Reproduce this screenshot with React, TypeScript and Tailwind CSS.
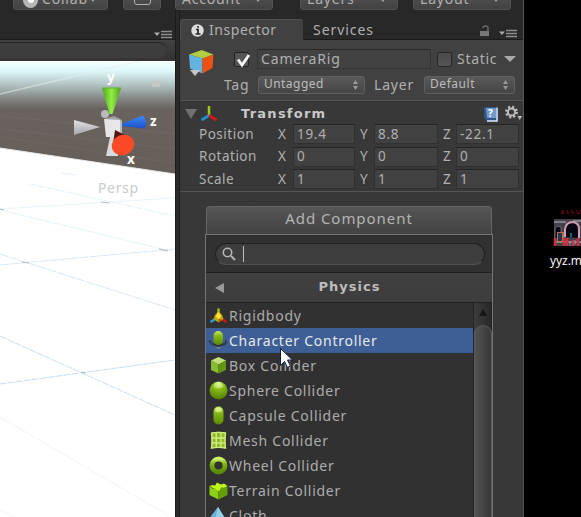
import React from 'react';

const menuItems = [
  ['Rigidbody', 'rigid'],
  ['Character Controller', 'character'],
  ['Box Collider', 'box'],
  ['Sphere Collider', 'sphere'],
  ['Capsule Collider', 'capsule'],
  ['Mesh Collider', 'mesh'],
  ['Wheel Collider', 'wheel'],
  ['Terrain Collider', 'terrain'],
  ['Cloth', 'cloth'],
];

const vectors = [
  ['Position', '19.4', '8.8', '-22.1'],
  ['Rotation', '0', '0', '0'],
  ['Scale', '1', '1', '1'],
];

function Defs() {
  return (
    <svg className="absolute h-0 w-0">
      <defs>
        <radialGradient id="green" cx=".5" cy=".12" r=".9">
          <stop offset="0" stopColor="#e4ff9a" />
          <stop offset=".3" stopColor="#8fc31a" />
          <stop offset="1" stopColor="#4f7d00" />
        </radialGradient>
        <linearGradient id="greenV" x1="0" y1="0" x2="0" y2="1">
          <stop offset="0" stopColor="#c9ec62" />
          <stop offset=".35" stopColor="#86b818" />
          <stop offset="1" stopColor="#588900" />
        </linearGradient>
        <linearGradient id="cone" x1="0" y1="0" x2="1" y2="0">
          <stop offset="0" stopColor="#4fa51b" />
          <stop offset=".5" stopColor="#92ee45" />
          <stop offset="1" stopColor="#4c9c1c" />
        </linearGradient>
        <linearGradient id="grey" x1="0" y1="0" x2="0" y2="1">
          <stop offset="0" stopColor="#e2e2e5" />
          <stop offset="1" stopColor="#a5a5aa" />
        </linearGradient>
        <linearGradient id="blue" x1="0" y1="0" x2="0" y2="1">
          <stop offset="0" stopColor="#3f8cff" />
          <stop offset="1" stopColor="#1850c4" />
        </linearGradient>
      </defs>
    </svg>
  );
}

function ItemIcon({ kind }: { kind: string }) {
  return (
    <svg className="h-5 w-5 shrink-0" viewBox="0 0 20 20">
      {kind === 'rigid' && (
        <>
          <path d="M10.500 2.500v7" stroke="#a0cc12" strokeWidth="2.4" />
          <path d="M9 12 2.500 16" stroke="#2c9ddd" strokeWidth="2.6" />
          <path d="m12 12 6.500 4" stroke="#d01616" strokeWidth="2.6" />
          <path d="m10.500 5 3.500 4 1.500 4-5 3.500-5-3.500 1.500-4z" fill="#c9a400" />
          <path d="m10.500 6 3 4-3 3.500-3-3.500z" fill="#f7e236" />
          <path d="M10.500 13v3.500l4.500-3z" fill="#8f7200" />
        </>
      )}
      {kind === 'character' && (
        <>
          <path d="m.500 10 2.500-1v2.500l2.500 1h9l2.500-1V9l2.500 1-2 4-3.500 1h-1l-2.500 4-2.500-4h-1L3.500 14z" fill="#303b46" />
          <path d="m7.500 16 3 2.500 3-2.500z" fill="#71808a" />
          <rect x="5.500" y="0" width="9.500" height="14" rx="4.700" fill="url(#greenV)" />
        </>
      )}
      {kind === 'box' && (
        <>
          <path d="m10.500 1 7.500 3.500-7.500 4L3 4.500z" fill="#bfe176" />
          <path d="m3 4.500 7.500 4v9L3 14z" fill="#88bd33" />
          <path d="m18 4.500-7.500 4v9L18 14z" fill="#5f9612" />
        </>
      )}
      {kind === 'sphere' && (
        <>
          <circle cx="10.500" cy="9.500" r="9" fill="url(#green)" />
          <ellipse cx="10.500" cy="4.500" rx="5" ry="3" fill="#e4fca8" opacity=".45" />
        </>
      )}
      {kind === 'capsule' && (
        <>
          <rect x="5.500" y=".5" width="10" height="18" rx="5" fill="url(#greenV)" />
          <ellipse cx="10.500" cy="4" rx="3.200" ry="2.300" fill="#e8ffa9" opacity=".65" />
        </>
      )}
      {kind === 'mesh' && (
        <>
          <path d="M3 1.500q7.500-1.500 15 0-1 8 0 16-7.500-1.500-15 0 1-8 0-16" fill="#8dba2b" />
          <path d="M3.500 2q7-1.300 14 0-1 7.500 0 15-7-1.300-14 0 1-7.500 0-15M8.300 2v15M13 2v15M4 7h13M4 12h13" fill="none" stroke="#d0eb7e" strokeWidth="1.400" />
        </>
      )}
      {kind === 'wheel' && (
        <>
          <circle cx="10.500" cy="9.500" r="6.500" fill="none" stroke="url(#greenV)" strokeWidth="4.800" />
          <path d="M6 3.500q4.500-2 9 0" stroke="#d8f87e" fill="none" opacity=".7" />
        </>
      )}
      {kind === 'terrain' && (
        <>
          <path d="m1.500 5 3-1 2.500.500 2-3 4 2 3-1 3.500 2.500-9 5.500z" fill="#bdf51d" />
          <path d="M1.500 5 5 8l2-1 3.500 4v7.500l-9-4.500z" fill="#8ed114" />
          <path d="m19.500 5-3.500 2-2.500-1-3 5v7.500l9-4.500z" fill="#659e06" />
        </>
      )}
      {kind === 'cloth' && (
        <>
          <path d="M10 1 3 10l-1 7 8 3 8-6z" fill="#69b2d6" />
          <path d="m10 1-2 9 3 9 7-5z" fill="#94cee8" />
        </>
      )}
    </svg>
  );
}

function MenuIcon() {
  return (
    <svg className="h-[9px] w-[18px]" viewBox="0 0 18 9">
      <path d="M0 2.500h6l-3 3.500z" fill="#aaa" />
      <path d="M7 1.500h11M7 4.500h11M7 7.500h11" stroke="#8c8c8c" strokeWidth="1.500" />
    </svg>
  );
}

function ToolbarButton({ className, text }: { className: string; text: string }) {
  return (
    <div className={'flex h-5 shrink-0 items-center rounded-[3px] border border-[#525252] bg-linear-to-b from-[#555] to-[#424242] px-1.5 ' + className}>
      {text === 'Collab' && (
        <span className="mr-1 ml-[3px] grid h-[15px] w-[15px] shrink-0 place-items-center rounded-full bg-[#b5b5b5]">
          <i className="h-1.5 w-1.5 rounded-full bg-white" />
        </span>
      )}
      <span className="relative -top-px">{text}</span>
      <svg className="mr-1 ml-auto h-2 w-2" viewBox="0 0 8 8"><path d="M1 2h6L4 6z" fill="#a5a5a5" /></svg>
    </div>
  );
}

function Toolbar() {
  return (
    <div className="h-2.5 shrink-0 overflow-hidden bg-[#282828]">
      <div className="-mt-2.5 flex pl-[13px] text-[14px] tracking-[.8px] text-[#b0b0b0]">
        <ToolbarButton className="w-[95px]" text="Collab" />
        <div className="ml-[15px] flex h-5 w-[38px] justify-center rounded-[3px] border border-[#525252] bg-linear-to-b from-[#555] to-[#424242]">
          <div className="mt-1.5 h-2 w-[17px] rounded-[3px] border-[1.500px] border-[#b0b0b0]" />
        </div>
        <ToolbarButton className="ml-3.5 w-[98px]" text="Account" />
        <ToolbarButton className="ml-[27px] w-[98px]" text="Layers" />
        <ToolbarButton className="ml-[15px] w-[98px]" text="Layout" />
      </div>
    </div>
  );
}

function SceneView() {
  return (
    <section className="flex w-[175px] shrink-0 flex-col">
      <div className="flex h-[30px] items-end justify-end border-b border-[#1d1d1d] pr-[3px]">
        <MenuIcon />
      </div>
      <div className="h-[21px] bg-linear-to-b from-[#414141] to-[#333] pt-0.5">
        <div className="h-4 w-[167px] rounded-r-full border-t border-[#252525] bg-[#3d3d3d]" />
      </div>
      <svg className="h-[456px] w-[175px]" viewBox="0 61 175 456">
        <defs>
          <linearGradient id="sky" x1="0" y1="0" x2="0" y2="1">
            <stop offset="0" stopColor="#f4ffff" />
            <stop offset=".08" stopColor="#def8f9" />
            <stop offset=".2" stopColor="#b3c4c5" />
            <stop offset=".33" stopColor="#828583" />
            <stop offset=".42" stopColor="#69625e" />
            <stop offset="1" stopColor="#665e59" />
          </linearGradient>
        </defs>
        <path fill="#fff" d="M0 61h175v456H0z" />
        <path fill="url(#sky)" d="M0 62h175v112L0 148z" />
        <path d="M0 94 139 61" stroke="#e6eeee" strokeWidth="1.300" opacity=".55" />
        <path d="m0 116 175 18M0 129l175 20M0 137l175 26" stroke="#827b75" opacity=".25" />
        <path d="m0 148 175 26" stroke="#e7e7e7" />
        <path d="m30 184 145 32M0 209l175-11M0 210l175 42" stroke="#e5f4fa" fill="none" strokeDasharray="8 1" />
        <path d="m0 265 175-16M0 254l175 56" stroke="#d9e8f3" fill="none" strokeDasharray="9 1" />
        <path d="m0 336 175 79M0 384l175-24" stroke="#cadeec" fill="none" strokeDasharray="7 1" />
        <path d="m0 417 171 100M0 510l14 7" stroke="#f1f3f5" fill="none" />
        <path d="m0 209 4 1m97-8 8 1M22 262l7 1m130-14 9 2m-87 121 5 1" stroke="#aebabf" />
        <path d="m62 173 14 2" stroke="#e0f3fa" />
        <path d="M152 81h8v6h-8z" fill="#c6c6c5" />
        <path d="M153 81v-3q3-3 6 0" stroke="#bbbfc0" fill="none" opacity=".15" />
        <circle cx="105" cy="114" r="4" fill="#bababd" />
        <path d="M102 88h19l-8.500 26h-3z" fill="url(#cone)" />
        <path d="M102 88h19" stroke="#61b22d" />
        <path d="m74 120 26 7-26 8z" fill="url(#grey)" />
        <path d="m121 124 22-8.500q5 6 2 13l-24-2.500z" fill="url(#blue)" />
        <path d="m104 119 10-3 8 4-3 4-13-1z" fill="#a1a2a6" />
        <path d="m104 119 16 1v17h-14z" fill="#e6e6e9" />
        <path d="m120 120 2 1v14l-2 2z" fill="#b9bbc0" />
        <path d="M110 137 106 156h12v-19z" fill="#dadade" />
        <path d="m115 130 10 5-12 9z" fill="#571611" />
        <ellipse cx="123" cy="145" rx="11.500" ry="10" fill="#fa4a27" transform="rotate(-20 123 145)" />
        <g fontFamily="Noto Sans, sans-serif" fontSize="13.500" fontWeight="700" fill="#fff">
          <text x="107" y="82">y</text>
          <text x="150" y="126">z</text>
          <text x="127" y="164">x</text>
        </g>
        <text x="98" y="193" fontFamily="Noto Sans, sans-serif" fontSize="14" textLength="40" fill="#cbcbcb">Persp</text>
      </svg>
    </section>
  );
}

function Select({ text, className }: { text: string; className: string }) {
  return (
    <div className={'flex h-[18px] shrink-0 items-center rounded-[3px] border border-[#606060] bg-linear-to-b from-[#595959] to-[#454545] pr-[5px] pl-[5px] text-[12px] text-[#bcbcbc] ' + className}>
      <span className="relative -top-px">{text}</span>
      <svg className="ml-auto h-3 w-[7px]" viewBox="0 0 7 12"><path d="m3.500 1 2.500 4H1zm0 10L1 7h5z" fill="#999" /></svg>
    </div>
  );
}

function Header() {
  return (
    <>
      <div className="mt-[9px] flex h-[21px] shrink-0 text-[14px]">
        <div className="flex w-[123px] items-center rounded-t-[3px] border-t border-l border-[#505050] bg-[#414141] pl-2.5">
          <svg className="h-[13px] w-[13px]" viewBox="0 0 13 13">
            <circle cx="6.500" cy="6.500" r="6.200" fill="#dedede" />
            <path d="M5 5.500h2v4M4.500 10h5M6 3h2" stroke="#292929" strokeWidth="1.700" fill="none" />
          </svg>
          <span className="ml-[5px] tracking-[.55px]">Inspector</span>
        </div>
        <div className="flex grow items-center border-b border-[#1c1c1c] pr-1.5 pl-2.5">
          <span className="relative top-px tracking-[.95px]">Services</span>
          <svg className="mt-1 mr-0.5 ml-auto h-3 w-[10px]" viewBox="0 0 10 12">
            <path d="M0 6h9v5H0z" fill="#777" />
            <path d="M3 3q0-2 2.500-2T8 3v3" stroke="#6a6a6a" strokeWidth="1.500" fill="none" />
          </svg>
          <div className="mt-2 ml-[7px]"><MenuIcon /></div>
        </div>
      </div>
      <div className="flex h-[61px] shrink-0 border-b border-[#555] bg-[#414141]">
        <svg className="mt-[9px] ml-2 h-7 w-7 shrink-0" viewBox="0 0 28 28">
          <path d="m13.500 1 12 4.500-11 4L1 5.500z" fill="#b1cd43" />
          <path d="m1 5.500 13.500 4v15L2 19.500z" fill="#62b3df" />
          <path d="m25.500 5.500-11 4v15l10-5.500z" fill="#ed5213" />
          <path d="m2 21h10l-5 6z" fill="#c6c6c6" />
        </svg>
        <div className="ml-[5px] flex min-w-0 grow flex-col text-[14px]">
          <div className="mt-[9px] flex h-5 items-center">
            <div className="ml-[13px] grid h-[15px] w-[15px] shrink-0 place-items-center rounded-[2px] border border-[#232323] bg-[#555]">
              <svg className="h-[15px] w-[15px] overflow-visible" viewBox="0 0 15 15"><path d="m3 6.500 4 5.500 7-10" stroke="#f4f4f4" strokeWidth="2.800" fill="none" /></svg>
            </div>
            <div className="ml-2 flex h-5 w-[174px] shrink-0 items-center border border-[#353535] border-t-[#292929] bg-[#424242] pl-[3px] tracking-[.85px]">CameraRig</div>
            <div className="ml-1.5 h-[15px] w-[15px] shrink-0 rounded-[2px] border border-[#272727] bg-linear-to-b from-[#4a4a4a] to-[#555]" />
            <span className="ml-[5px] w-[42px] tracking-[.7px]">Static</span>
            <svg className="ml-[5px] h-[7px] w-3 shrink-0" viewBox="0 0 12 7"><path d="M0 0h12L6 6z" fill="#aaa" /></svg>
          </div>
          <div className="mt-[7px] flex h-[18px] items-center">
            <span className="ml-[3px] w-[34px] tracking-[.7px]">Tag</span>
            <Select className="w-[107px] tracking-[.45px]" text="Untagged" />
            <span className="ml-[9px] w-[50px] tracking-[.8px]">Layer</span>
            <Select className="w-[91px] tracking-[.55px]" text="Default" />
          </div>
        </div>
      </div>
    </>
  );
}

function NumberField({ value, className }: { value: string; className: string }) {
  return <div className={'flex h-5 items-center border border-[#303030] border-t-[#242424] bg-[#414141] pt-px pl-[3px] tracking-[.7px] ' + className}>{value}</div>;
}

function Transform() {
  return (
    <div className="h-[91px] shrink-0 border-b border-[#545454]">
      <div className="flex h-[23px] items-center pt-0.5">
        <svg className="ml-[5px] h-3 w-3" viewBox="0 0 12 12"><path d="M0 1h12L6 11z" fill="#717171" /></svg>
        <svg className="ml-[3px] h-4 w-[17px]" viewBox="0 0 17 16">
          <path d="M9 0v10" stroke="#9ccc12" strokeWidth="2.500" />
          <path d="m9 9.500-7.500 4.500" stroke="#218fd0" strokeWidth="2.700" />
          <path d="m9 9.500 7.500 4.500" stroke="#db1717" strokeWidth="2.700" />
        </svg>
        <span className="ml-6 font-['DejaVu_Sans',sans-serif] font-bold tracking-[1.250px] text-[#c8c8c8]">Transform</span>
        <svg className="ml-auto h-4 w-4" viewBox="0 0 16 16">
          <path d="M1 1h11l3 2v12H4L1 12z" fill="#315887" />
          <path d="M3 2h10v10H4z" fill="#7299c9" />
          <path d="M14 1.500V15H4" stroke="#d7e8f6" strokeWidth="1.500" fill="none" />
          <text x="5" y="11" fontFamily="Noto Sans" fontSize="10" fontWeight="700" fill="#fff">?</text>
        </svg>
        <svg className="mr-px ml-1.5 h-[17px] w-[17px]" viewBox="0 0 17 17">
          <circle cx="6.500" cy="7" r="5.200" fill="none" stroke="#bcbcbc" strokeWidth="2.400" strokeDasharray="2.100 1.984" />
          <circle cx="6.500" cy="7" r="3.600" fill="none" stroke="#bcbcbc" strokeWidth="2" />
          <path d="M12.500 11h4.500l-2.300 4z" fill="#bcbcbc" />
        </svg>
      </div>
      <div className="flex flex-col gap-[2.500px] text-[13.500px]">
        {vectors.map(([name, x, y, z]) => (
          <div key={name} className="flex h-5 items-center pl-[19px] tracking-[.5px]">
            <span className="w-[79px] pt-px">{name}</span>
            <span className="w-[15px] pt-px">X</span>
            <NumberField className="w-[62px]" value={x} />
            <span className="ml-[5px] w-[14px] pt-px">Y</span>
            <NumberField className="w-16" value={y} />
            <span className="ml-[5px] w-[13px] pt-px">Z</span>
            <NumberField className="w-[63px]" value={z} />
          </div>
        ))}
      </div>
    </div>
  );
}

function ComponentMenu() {
  return (
    <div className="mt-3.5 ml-[25px] flex w-72 grow flex-col">
      <div className="mx-px flex h-7 shrink-0 items-center justify-center rounded-t-[4px] border border-b-0 border-[#666] bg-linear-to-b from-[#565656] to-[#424242] pb-[5px] text-[15px] tracking-[.95px] text-[#b4b4b4]">Add Component</div>
      <div className="flex grow flex-col border border-b-0 border-[#747474] bg-[#313131]">
        <div className="h-[38px] shrink-0 border-b border-[#202020] pr-[7px] pl-[9px] pt-2">
          <div className="flex h-[22px] items-center rounded-full border border-[#202020] border-b-[#505050] bg-[#3e3e3e] pl-1.5">
            <svg className="h-[14px] w-[14px]" viewBox="0 0 14 14"><circle cx="5.500" cy="5.500" r="4.200" stroke="#b5b5b5" strokeWidth="1.600" fill="none" /><path d="m9 9 4 4" stroke="#b5b5b5" strokeWidth="2" /></svg>
            <i className="ml-[7px] h-4 w-px bg-[#bdbdbd]" />
          </div>
        </div>
        <div className="flex h-[30px] shrink-0 items-center border-b border-[#202020] bg-linear-to-b from-[#404040] to-[#3d3d3d]">
          <svg className="ml-[9px] h-2.5 w-[9px]" viewBox="0 0 9 10"><path d="M0 5 9 0v10z" fill="#999" /></svg>
          <span className="grow pb-[3px] pl-px text-center font-['DejaVu_Sans',sans-serif] font-bold tracking-[1px] text-[#bdbdbd]">Physics</span>
          <div className="w-[18px]" />
        </div>
        <div className="flex grow">
          <div className="w-[267px] text-[14px]">
            {menuItems.map(([name, kind]) => (
              <div key={name} className={'flex h-[25px] items-center pl-0.5 tracking-[.74px] ' + (kind === 'character' ? 'bg-[#3e5f96] text-[#e8e8e8]' : 'text-[#acacac]')}>
                <ItemIcon kind={kind} />
                <span className="ml-px">{name}</span>
              </div>
            ))}
          </div>
          <div className="flex grow flex-col border-l border-[#242424] bg-linear-to-r from-[#3c3c3c] to-[#272727]">
            <svg className="mt-[6px] h-[9px] w-full" viewBox="0 0 18 9"><path d="M5 7h8L9 0z" fill="#171717" /></svg>
            <div className="mt-[7px] grow rounded-t-full border border-b-0 border-[#5b5b5b] bg-linear-to-r from-[#535353] to-[#373737]" />
          </div>
        </div>
      </div>
    </div>
  );
}

function DesktopFile() {
  return (
    <aside className="flex w-[57px] shrink-0 flex-col overflow-hidden bg-black pt-[209px] pl-[26px]">
      <svg className="ml-[3px] h-[38px] w-7" viewBox="0 0 28 38">
        <path d="M9 2h2m3 0h1m3 0h2m3 0h1m3 0h1M8 4h3m3 0h2m3 0h2m3 0h3" stroke="#760017" strokeWidth="1.500" />
        <path d="M1 10h27v27H1z" fill="#44414b" />
        <path d="M1 13h12m7-1h8M1 33h27" stroke="#858088" strokeWidth="2" />
        <path d="M2 29V19q2-3 6-1v11" fill="#050810" stroke="#756b78" />
        <path d="M12 28V20q1-7 8-7 6 1 6 7v9" fill="#050810" stroke="#cf9eb1" strokeWidth="2" />
        <path d="M4 23h7v10H4z" fill="#b5744b" />
        <path d="M5 24h4v8H5z" fill="#263254" />
        <path d="M2 37v-8m9 8v-8m3 8v-8m6 8v-6m5 6v-8" stroke="#d12f3d" strokeWidth="2.500" />
        <path d="M17 37v-5m5 4v-5" stroke="#899498" />
        <path d="M18 24v4" stroke="#35bdd0" />
      </svg>
      <span className="mt-[6px] font-['Open_Sans','Noto_Sans',sans-serif] text-[12px] leading-4 whitespace-nowrap text-white">yyz.mp3</span>
    </aside>
  );
}

export default function App() {
  return (
    <main className="relative flex h-[517px] w-[581px] overflow-hidden bg-[#282828] font-['Noto_Sans',sans-serif] text-[13px] leading-none whitespace-nowrap text-[#b0b0b0]">
      <Defs />
      <div className="flex w-[524px] shrink-0 flex-col border-r border-[#555]">
        <Toolbar />
        <div className="flex min-h-0 grow">
          <SceneView />
          <div className="w-[5px] shrink-0 border-x border-[#1b1b1b] bg-[#292929]" />
          <section className="flex min-w-0 grow flex-col">
            <Header />
            <div className="flex min-h-0 grow flex-col overflow-hidden bg-[#383838]">
              <Transform />
              <ComponentMenu />
            </div>
          </section>
        </div>
      </div>
      <DesktopFile />
      <svg className="absolute top-[347px] left-[279px] h-[23px] w-4" viewBox="0 0 16 23"><path d="M1.500 1.500v17l4-4 3 6 3-1.500-3-6h5z" fill="white" stroke="#182039" /></svg>
    </main>
  );
}
